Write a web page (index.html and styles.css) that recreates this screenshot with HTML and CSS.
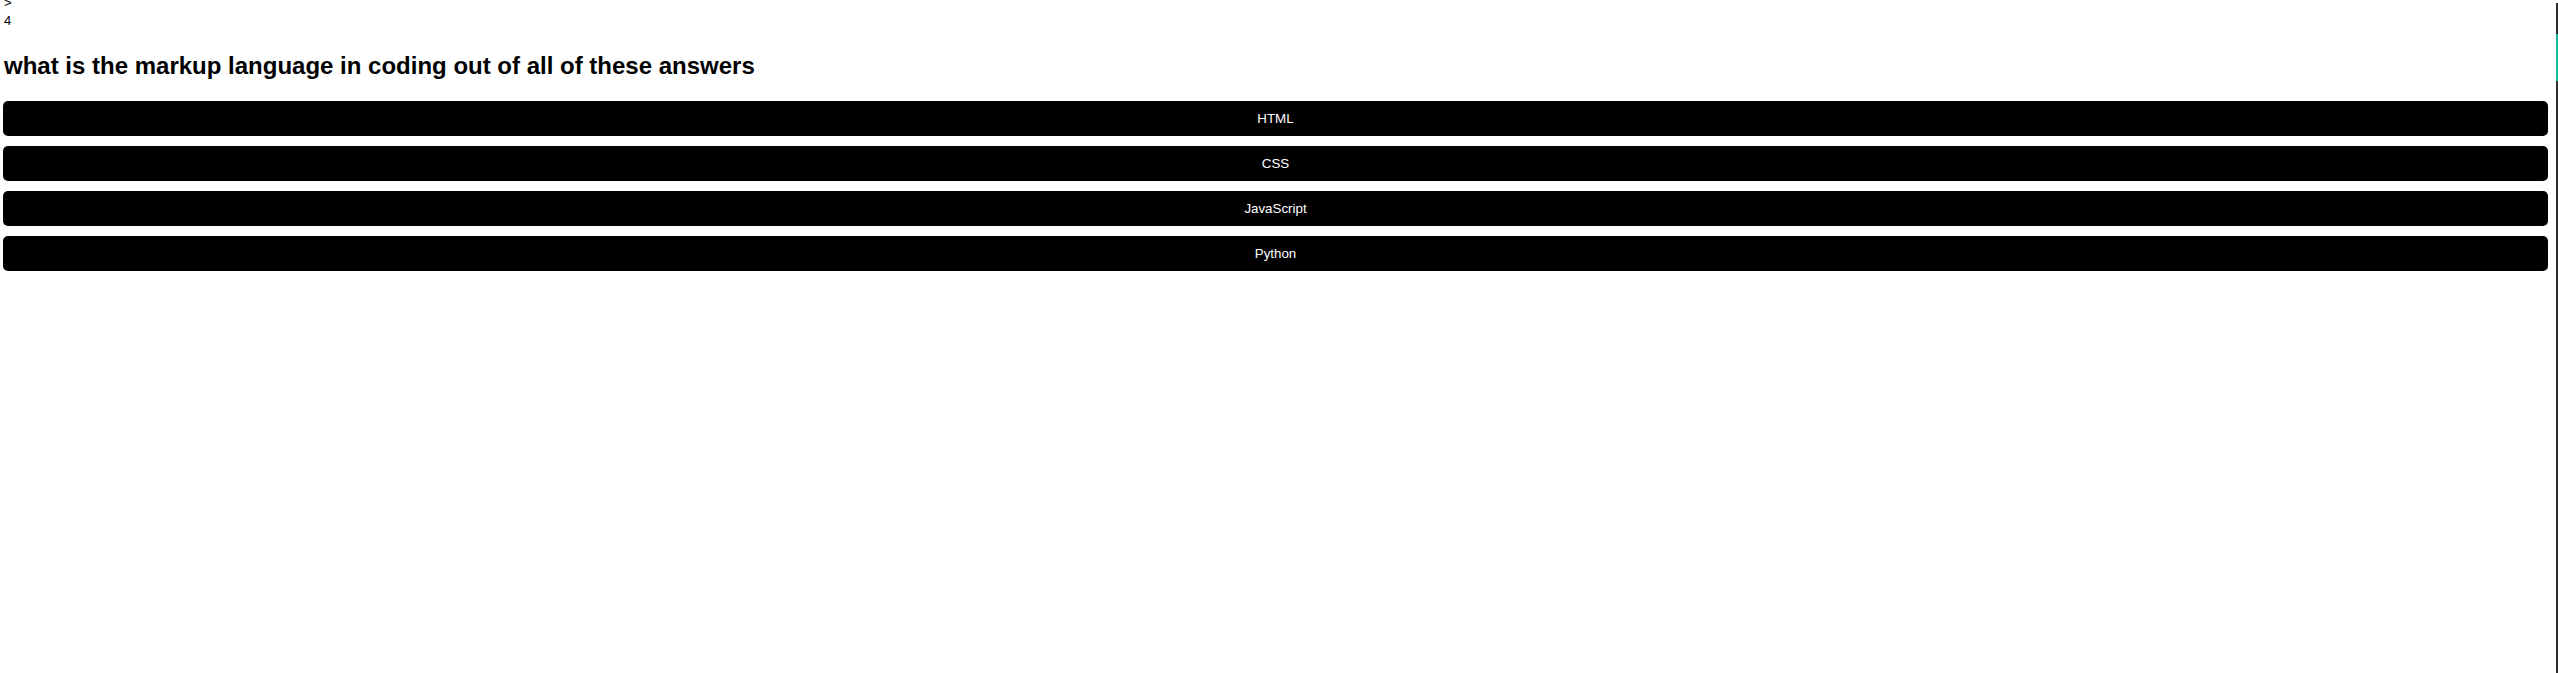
FILE: index.html
```html
<!DOCTYPE html>
<html lang="en">
<head>
<meta charset="utf-8">
<title>Quiz</title>
<link rel="stylesheet" href="styles.css">
</head>
<body>
<div class="page">
  <div class="prompt">
    <div class="prompt-line">&gt;</div>
    <div class="prompt-line">4</div>
  </div>
  <h2 class="question">what is the markup language in coding out of all of these answers</h2>
  <div class="answers">
    <button class="answer">HTML</button>
    <button class="answer">CSS</button>
    <button class="answer">JavaScript</button>
    <button class="answer">Python</button>
  </div>
</div>
<div class="scrollbar"><div class="scrollbar-thumb"></div></div>
</body>
</html>
```
FILE: styles.css
```css
html, body {
  margin: 0;
  padding: 0;
  background: #fff;
}

body {
  font-family: "Liberation Sans", Arial, sans-serif;
  color: #000;
  overflow: hidden;
}

.page {
  padding: 0 10px 0 3px;
}

.prompt {
  font-size: 13px;
  line-height: 18px;
  margin-top: -6px;
  padding-left: 1px;
  color: #000;
}

.question {
  font-size: 24px;
  line-height: 28px;
  font-weight: bold;
  margin: 22px 0 21px 0;
  padding-left: 1px;
}

.answers {
  display: flex;
  flex-direction: column;
  gap: 10px;
}

.answer {
  display: block;
  width: 100%;
  height: 35px;
  border: none;
  border-radius: 5px;
  background: #000;
  color: #fff;
  font-family: "Liberation Sans", Arial, sans-serif;
  font-size: 13.333px;
  text-align: center;
  padding: 0;
  cursor: pointer;
}

.scrollbar {
  position: fixed;
  top: 3px;
  right: 0;
  bottom: 0;
  width: 2px;
  background: #2e2e2e;
}

.scrollbar-thumb {
  margin-top: 31px;
  height: 47px;
  background: #13b99a;
}
```
